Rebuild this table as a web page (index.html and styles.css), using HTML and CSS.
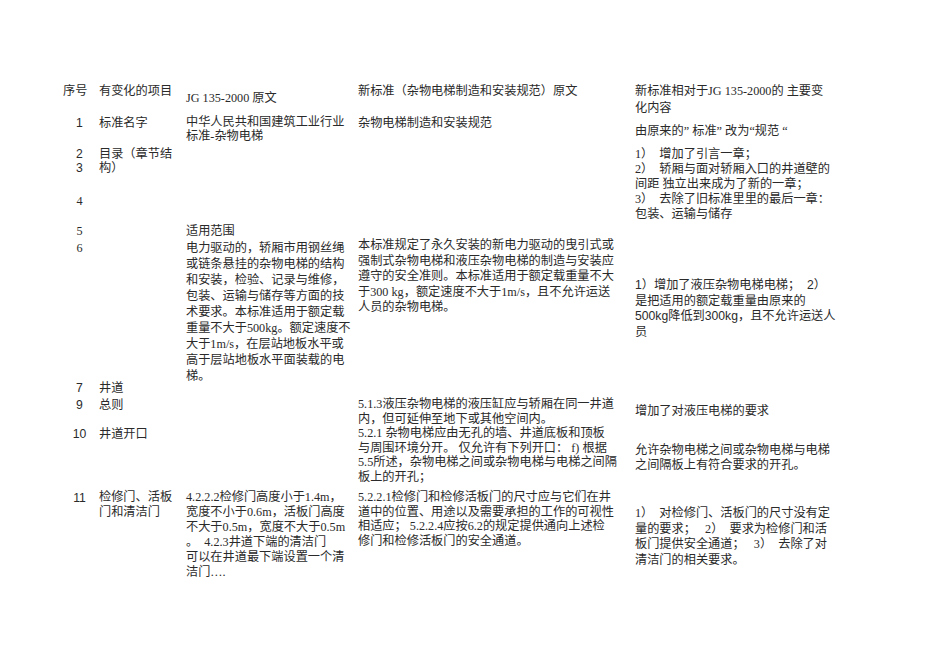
FILE: index.html
```html
<!DOCTYPE html>
<html lang="zh-CN">
<head>
<meta charset="utf-8">
<title>杂物电梯标准对比</title>
<link rel="stylesheet" href="styles.css">
</head>
<body>
<div class="doc">
  <div class="row r-head">
    <div class="head">序号</div>
    <div>有变化的项目</div>
    <div class="o7">JG 135-2000 原文</div>
    <div>新标准（杂物电梯制造和安装规范）原文</div>
    <div class="l16">新标准相对于JG 135-2000的 主要变<br>化内容</div>
  </div>
  <div class="row r1">
    <div class="num">1</div>
    <div>标准名字</div>
    <div class="l14">中华人民共和国建筑工业行业<br>标准-杂物电梯</div>
    <div>杂物电梯制造和安装规范</div>
    <div class="o8">由原来的” 标准” 改为“规范 “</div>
  </div>
  <div class="row r2">
    <div class="num l14">2<br>3</div>
    <div class="l14">目录（章节结<br>构）</div>
    <div></div>
    <div></div>
    <div class="l15">1）&nbsp; 增加了引言一章；<br>2）&nbsp; 轿厢与面对轿厢入口的井道壁的<br>间距 独立出来成为了新的一章；<br>3）&nbsp; 去除了旧标准里里的最后一章：<br>包装、运输与储存</div>
  </div>
  <div class="row r4">
    <div class="num serif">4</div>
    <div></div><div></div><div></div><div></div>
  </div>
  <div class="row r5">
    <div class="num serif">5</div>
    <div></div>
    <div>适用范围</div>
    <div></div><div></div>
  </div>
  <div class="row r6">
    <div class="num serif">6</div>
    <div></div>
    <div>电力驱动的，轿厢市用钢丝绳<br>或链条悬挂的杂物电梯的结构<br>和安装，检验、记录与维修，<br>包装、运输与储存等方面的技<br>术要求。本标准适用于额定载<br>重量不大于500kg。额定速度不<br>大于1m/s，在层站地板水平或<br>高于层站地板水平面装载的电<br>梯。</div>
    <div class="om2 l155">本标准规定了永久安装的新电力驱动的曳引式或<br>强制式杂物电梯和液压杂物电梯的制造与安装应<br>遵守的安全准则。本标准适用于额定载重量不大<br>于300 kg，额定速度不大于1m/s，且不允许运送<br>人员的杂物电梯。</div>
    <div class="o38 l157 sans">1）增加了液压杂物电梯电梯；&nbsp; 2）<br>是把适用的额定载重量由原来的<br>500kg降低到300kg，且不允许运送人<br>员</div>
  </div>
  <div class="row r7">
    <div class="num">7</div>
    <div>井道</div>
    <div></div><div></div><div></div>
  </div>
  <div class="row r9">
    <div class="num">9</div>
    <div>总则</div>
    <div></div>
    <div class="l145">5.1.3液压杂物电梯的液压缸应与轿厢在同一井道<br>内，但可延伸至地下或其他空间内。</div>
    <div class="o6">增加了对液压电梯的要求</div>
  </div>
  <div class="row r10">
    <div class="num">10</div>
    <div>井道开口</div>
    <div></div>
    <div class="l145">5.2.1 杂物电梯应由无孔的墙、井道底板和顶板<br>与周围环境分开。 仅允许有下列开口： f) 根据<br>5.5所述，杂物电梯之间或杂物电梯与电梯之间隔<br>板上的开孔；</div>
    <div class="o17 l15">允许杂物电梯之间或杂物电梯与电梯<br>之间隔板上有符合要求的开孔。</div>
  </div>
  <div class="row r11">
    <div class="num">11</div>
    <div class="l15">检修门、活板<br>门和清洁门</div>
    <div class="l15">4.2.2.2检修门高度小于1.4m，<br>宽度不小于0.6m，活板门高度<br>不大于0.5m，宽度不大于0.5m<br>。&nbsp; 4.2.3井道下端的清洁门<br>可以在井道最下端设置一个清<br>洁门….</div>
    <div class="l147">5.2.2.1检修门和检修活板门的尺寸应与它们在井<br>道中的位置、用途以及需要承担的工作的可视性<br>相适应； 5.2.2.4应按6.2的规定提供通向上述检<br>修门和检修活板门的安全通道。</div>
    <div class="o16 l155">1）&nbsp; 对检修门、活板门的尺寸没有定<br>量的要求；&nbsp;&nbsp; 2）&nbsp; 要求为检修门和活<br>板门提供安全通道；&nbsp;&nbsp; 3）&nbsp; 去除了对<br>清洁门的相关要求。</div>
  </div>
</div>
</body>
</html>
```

FILE: styles.css
```css
html, body {
  margin: 0;
  padding: 0;
  background: #ffffff;
}

.doc {
  padding: 83px 0 40px 63px;
  font-family: "Liberation Serif", "Noto Sans CJK SC", serif;
  font-size: 12.2px;
  line-height: 16px;
  color: #2a2a2a;
}

.row {
  display: grid;
  grid-template-columns: 36px 87px 172px 277px 250px;
  align-items: start;
}

.row > div {
  white-space: nowrap;
}

.r-head { height: 32px; }
.r1 { height: 32px; }
.r2 { height: 46px; }
.r4 { height: 30px; }
.r5 { height: 17px; }
.r6 { height: 140px; }
.r7 { height: 17px; }
.r9 { height: 29px; }
.r10 { height: 64px; }

.num {
  text-align: center;
  padding-right: 3px;
  font-family: "Liberation Sans", "Noto Sans CJK SC", sans-serif;
}

.num.serif {
  font-family: "Liberation Serif", "Noto Sans CJK SC", serif;
}

.sans {
  font-family: "Liberation Sans", "Noto Sans CJK SC", sans-serif;
}

.head {
  text-align: left;
}

.o6 { padding-top: 6px; }
.o7 { padding-top: 7px; }
.o8 { padding-top: 8px; }
.o16 { padding-top: 16px; }
.o17 { padding-top: 17px; }
.o38 { padding-top: 38px; }
.om2 { margin-top: -2px; }

.l14 { line-height: 14px; }
.l145 { line-height: 14.5px; }
.l147 { line-height: 14.7px; }
.l15 { line-height: 15px; }
.l155 { line-height: 15.5px; }
.l157 { line-height: 15.7px; }
.l16 { line-height: 16.5px; }
```
